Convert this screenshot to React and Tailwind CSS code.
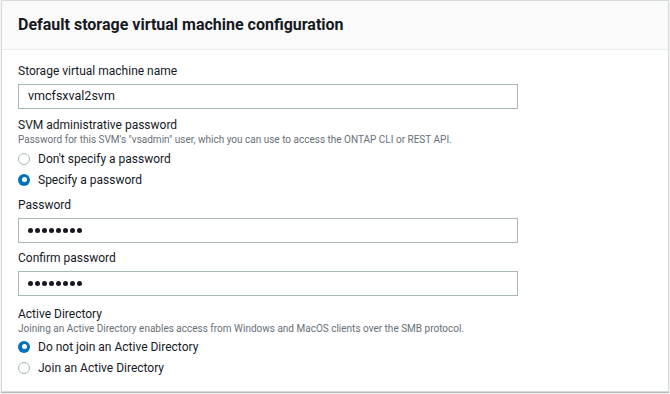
import React from 'react';

function Radio({ checked, label }) {
  return (
    <label className="flex items-center gap-[8px] h-[21px]">
      {checked ? (
        <span className="flex h-[12px] w-[12px] items-center justify-center rounded-full bg-[#0073bb]">
          <span className="h-[5px] w-[5px] rounded-full bg-white" />
        </span>
      ) : (
        <span className="h-[12px] w-[12px] rounded-full border border-[#aab7b8] bg-white" />
      )}
      <span className="text-[12px] text-[#16191f]">{label}</span>
    </label>
  );
}

function Field({ label, value }) {
  return (
    <div className="flex flex-col">
      <div className="text-[12px] text-[#16191f] leading-[18px]">{label}</div>
      <div className="mt-[4px] flex h-[25px] w-[500px] items-center border border-[#aab7b8] bg-white px-[9px] text-[12.5px] text-[#16191f]">
        {value}
      </div>
    </div>
  );
}

function Dots() {
  return (
    <span className="flex gap-[2px]">
      {Array.from({ length: 8 }).map((_, i) => (
        <span key={i} className="h-[5px] w-[5px] rounded-full bg-[#16191f]" />
      ))}
    </span>
  );
}

export default function App() {
  return (
    <div className="h-[394px] w-[670px] bg-white font-['Roboto',sans-serif]">
      <div className="ml-[1px] h-[392px] w-[668px] border border-[#d5dbdb] shadow-[0_1px_1px_rgba(0,28,36,0.3)]">
        <div className="flex h-[49px] items-center border-b border-[#eaeded] bg-[#fafafa] px-[16px]">
          <h2 className="text-[16px] font-bold text-[#16191f]">Default storage virtual machine configuration</h2>
        </div>
        <div className="px-[16px] pt-[12px]">
          <Field label="Storage virtual machine name" value="vmcfsxval2svm" />

          <div className="mt-[8px] text-[12px] leading-[16px] text-[#16191f]">SVM administrative password</div>
          <div className="text-[10px] leading-[14px] text-[#687078]">
            Password for this SVM's "vsadmin" user, which you can use to access the ONTAP CLI or REST API.
          </div>
          <div className="mt-[1px] flex flex-col">
            <Radio label="Don't specify a password" />
            <Radio checked label="Specify a password" />
          </div>

          <div className="mt-[6px]">
            <Field label="Password" value={<Dots />} />
          </div>
          <div className="mt-[6px]">
            <Field label="Confirm password" value={<Dots />} />
          </div>

          <div className="mt-[10px] text-[12px] leading-[16px] text-[#16191f]">Active Directory</div>
          <div className="text-[10px] leading-[14px] text-[#687078]">
            Joining an Active Directory enables access from Windows and MacOS clients over the SMB protocol.
          </div>
          <div className="flex flex-col">
            <Radio checked label="Do not join an Active Directory" />
            <Radio label="Join an Active Directory" />
          </div>
        </div>
      </div>
    </div>
  );
}
